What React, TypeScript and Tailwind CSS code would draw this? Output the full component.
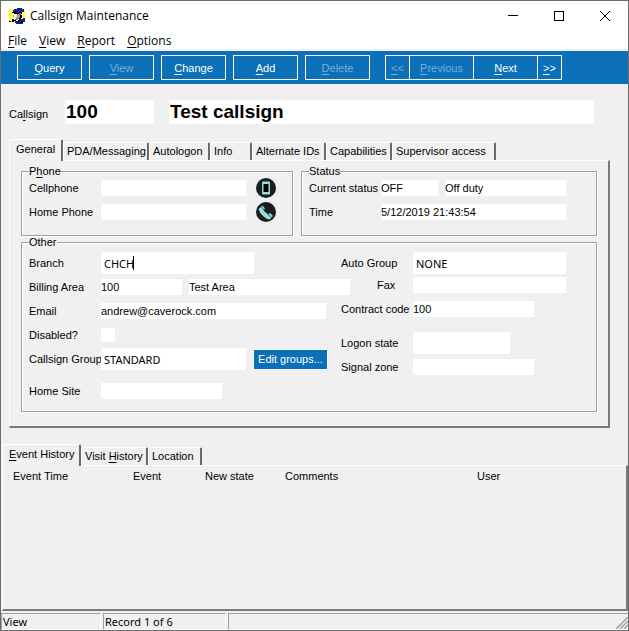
import { useState } from 'react';
import type { InputHTMLAttributes, ReactNode } from 'react';
import clsx from 'clsx';

// "&File" -> underlined F, same as the native menu captions
function Caption({ text }: { text: string }) {
  const i = text.indexOf('&');
  if (i < 0) return <>{text}</>;
  return (
    <>
      {text.slice(0, i)}
      <span className="underline underline-offset-2">{text[i + 1]}</span>
      {text.slice(i + 2)}
    </>
  );
}

function AppIcon() {
  return (
    <svg width="16" height="16" viewBox="0 0 16 16" shapeRendering="crispEdges" aria-hidden="true">
      <path fill="#ffff33" d="M0 1h5v4h-1v7h-4zM13 1h3v9h-3zM0 11h5v3h-5z" />
      <path fill="#10208a" d="M5 1h3v-1h5v1h2v3h-2v1h-8v-1h-1v-2h1z" />
      <path fill="#000" d="M3 4h4v1h6v1h-8v-1h-2z" />
      <path fill="#f4f4f4" d="M5 6h4v2h-1v4h-2v-2h-1z" />
      <path fill="#9a9a9a" d="M8 6h3v5h-2v1h-2v-3h1zM4 7h1v2h-1z" />
      <path fill="#d03030" d="M10 5h2v2h-2zM6 11h2v1h-2z" />
      <path fill="#000" d="M11 7h2v3h-1v2h-2v-2h1zM3 11h2v1h2v1h-2v1h-2zM0 13h2v1h-2z" />
      <path fill="#10208a" d="M9 12h2v-1h3v-1h2v4h-2v2h-7v-1h-1v-2h3z" />
      <path fill="#000" d="M7 13h3v1h-3zM12 13h2v2h-2z" />
    </svg>
  );
}

function MobileIcon() {
  return (
    <svg width="20" height="20" viewBox="0 0 20 20" aria-hidden="true">
      <circle cx="10" cy="10" r="10" fill="#1c1c1c" />
      <rect x="6" y="3.500" width="8" height="13" rx="1" fill="#8fe0e0" />
      <rect x="7.500" y="6" width="5" height="8" fill="#000" />
    </svg>
  );
}

function HandsetIcon() {
  return (
    <svg width="20" height="20" viewBox="0 0 20 20" aria-hidden="true">
      <circle cx="10" cy="10" r="10" fill="#1c1c1c" />
      <path
        d="M2.500 7L6.500 3.500L9 6.500L7.500 8.500L12 12.500L14 11L17 14L13.500 17.500Q11 17.500 7.500 14.500Q3.500 11 2.500 7Z"
        fill="#8fe0e0"
      />
      <path d="M5 4.500L8 8M12 12.500L15.500 15.500" stroke="#1c1c1c" strokeWidth="0.700" />
    </svg>
  );
}

interface FieldProps extends InputHTMLAttributes<HTMLInputElement> {
  className: string;
}

function Field({ className, ...rest }: FieldProps) {
  return <input type="text" className={clsx('shrink-0 bg-white outline-none', className)} {...rest} />;
}

interface RowProps {
  id: string;
  label: string;
  className?: string;
  labelClass?: string;
  children: ReactNode;
}

function Row({ id, label, className, labelClass, children }: RowProps) {
  return (
    <div className={clsx('flex items-center', className)}>
      <label htmlFor={id} className={clsx('w-[72px] shrink-0 whitespace-nowrap', labelClass)}>
        {label}
      </label>
      {children}
    </div>
  );
}

function Group({ title, className, children }: { title: string; className: string; children: ReactNode }) {
  return (
    <fieldset
      className={clsx(
        'border border-[#a0a0a0] px-[7px] shadow-[1px_1px_0_#fff,inset_1px_1px_0_#fff]',
        className
      )}
    >
      <legend className="h-3 bg-[#f0f0f0] leading-3">
        <Caption text={title} />
      </legend>
      {children}
    </fieldset>
  );
}

interface TabItem {
  name: string;
  width: string;
}

function TabStrip({ items }: { items: TabItem[] }) {
  const [active, setActive] = useState(items[0].name);
  return (
    <div role="tablist" className="flex items-end">
      {items.map((tab) => (
        <button
          key={tab.name}
          type="button"
          role="tab"
          aria-selected={tab.name === active}
          onClick={() => setActive(tab.name)}
          className={clsx(
            'rounded-t-xs border-t border-r-2 border-l border-t-white border-r-[#696969] border-l-white bg-[#f0f0f0] text-left whitespace-nowrap',
            tab.name === active ? 'z-10 -mb-px h-[22px] pb-1 pl-1.5' : 'h-[18px] pb-0.5 pl-[3px]',
            tab.width
          )}
        >
          <Caption text={tab.name} />
        </button>
      ))}
    </div>
  );
}

const panelBorder =
  'border-t border-l border-r-2 border-b-2 border-t-white border-l-white border-r-[#7a7a7a] border-b-[#7a7a7a]';

const menus = ['&File', '&View', '&Report', '&Options'];

const actions = [
  { name: '&Query', disabled: false },
  { name: '&View', disabled: true },
  { name: '&Change', disabled: false },
  { name: '&Add', disabled: false },
  { name: '&Delete', disabled: true },
];

const navigation = [
  { name: '&<<', disabled: true, width: 'w-[25px]' },
  { name: '&Previous', disabled: true, width: '-ml-px w-[65px]' },
  { name: '&Next', disabled: false, width: '-ml-px w-[65px]' },
  { name: '&>>', disabled: false, width: '-ml-px w-[25px]' },
];

const detailTabs = [
  { name: 'General', width: 'w-[54px]' },
  { name: 'PDA/Messaging', width: 'w-[86px]' },
  { name: 'Autologon', width: 'w-[61px]' },
  { name: 'Info', width: 'w-[42px]' },
  { name: 'Alternate IDs', width: 'w-[74px]' },
  { name: 'Capabilities', width: 'w-[66px]' },
  { name: 'Supervisor access', width: 'w-[104px]' },
];

const historyTabs = [
  { name: '&Event History', width: 'w-[79px]' },
  { name: 'Visit &History', width: 'w-[67px]' },
  { name: 'Location', width: 'w-[54px]' },
];

export default function App() {
  return (
    <div className="flex min-h-screen flex-col border border-[#6b6b6b] bg-[#f0f0f0] font-['Liberation_Sans',Arial,sans-serif] text-[11px] leading-[14px] text-black">
      <header className="bg-white font-['Open_Sans','Segoe_UI',sans-serif] text-[12px] leading-4">
        <div className="flex h-[30px] items-center pl-2">
          <AppIcon />
          <h1 className="ml-[5px] flex-1">Callsign Maintenance</h1>
          <button type="button" aria-label="Minimize" className="flex h-full w-[46px] items-center justify-center">
            <svg width="10" height="10" shapeRendering="crispEdges"><path d="M0 4.500H10" stroke="#000" /></svg>
          </button>
          <button type="button" aria-label="Maximize" className="flex h-full w-[46px] items-center justify-center">
            <svg width="10" height="10" shapeRendering="crispEdges"><path d="M.5 .5H9.500V9.500H.5Z" stroke="#000" fill="none" /></svg>
          </button>
          <button type="button" aria-label="Close" className="flex h-full w-[46px] items-center justify-center">
            <svg width="10" height="10"><path d="M0 0L10 10M10 0L0 10" stroke="#000" /></svg>
          </button>
        </div>
        <nav className="flex h-[18px] gap-3 pt-0.5 pl-[7px]">
          {menus.map((menu) => (
            <button key={menu} type="button"><Caption text={menu} /></button>
          ))}
        </nav>
      </header>

      <div className="mt-0.5 flex h-[33px] items-center gap-[7px] bg-[#0b70b8] px-4 text-white">
        {actions.map((action) => (
          <button
            key={action.name}
            type="button"
            disabled={action.disabled}
            className="h-[25px] w-[65px] border border-white disabled:text-[#79afd9]"
          >
            <Caption text={action.name} />
          </button>
        ))}
        <div className="ml-2 flex">
          {navigation.map((action) => (
            <button
              key={action.name}
              type="button"
              disabled={action.disabled}
              className={clsx('h-[25px] border border-white disabled:text-[#79afd9]', action.width)}
            >
              <Caption text={action.name} />
            </button>
          ))}
        </div>
      </div>

      <div className="mt-4 flex items-center pr-[34px] pl-2">
        <label htmlFor="callsign" className="mt-1 w-14"><Caption text="Ca&llsign" /></label>
        <Field id="callsign" defaultValue="100" className="h-6 w-[89px] pl-px text-[19px] font-bold" />
        <Field
          aria-label="Callsign name"
          defaultValue="Test callsign"
          className="ml-[15px] h-6 w-0 min-w-0 flex-1 pl-px text-[19px] font-bold"
        />
      </div>

      <section className="mt-[15px] mr-[18px] ml-2">
        <TabStrip items={detailTabs} />
        <div className={clsx('px-[11px] pt-1 pb-[14px]', panelBorder)}>
          <div className="flex gap-2">
            <Group title="P&hone" className="h-[71px] w-[272px]">
              <Row id="cellphone" label="Cellphone" className="mt-px h-5">
                <Field id="cellphone" className="h-4 w-[145px]" />
                <button type="button" aria-label="Call cellphone" className="ml-[10px]"><MobileIcon /></button>
              </Row>
              <Row id="homePhone" label="Home Phone" className="mt-1 h-5">
                <Field id="homePhone" className="h-4 w-[145px]" />
                <button type="button" aria-label="Call home phone" className="ml-[10px]"><HandsetIcon /></button>
              </Row>
            </Group>
            <Group title="Status" className="h-[71px] flex-1">
              <Row id="status" label="Current status" className="mt-px h-5">
                <Field id="status" defaultValue="OFF" className="h-4 w-[57px]" />
                <Field aria-label="Status description" defaultValue="Off duty" className="ml-[7px] h-4 w-[121px]" />
              </Row>
              <Row id="time" label="Time" className="mt-1 h-5">
                <Field id="time" defaultValue="5/12/2019 21:43:54" className="h-4 w-[185px]" />
              </Row>
            </Group>
          </div>

          <Group title="Other" className="h-44">
            <div className="flex pt-1">
              <div className="w-[312px] shrink-0">
                <Row id="branch" label="Branch">
                  <div className="flex h-[22px] w-[153px] items-center bg-white pl-[3px]">
                    <Field id="branch" defaultValue="CHCH" className="h-4 w-[29px] font-['Noto_Sans',Tahoma,sans-serif]" />
                    <span className="h-[14px] w-px bg-black" />
                  </div>
                </Row>
                <Row id="billing" label="Billing Area" className="mt-[5px]">
                  <Field id="billing" defaultValue="100" className="h-4 w-[81px]" />
                  <Field aria-label="Billing area name" defaultValue="Test Area" className="ml-[7px] h-4 w-[161px]" />
                </Row>
                <Row id="email" label="Email" className="mt-2">
                  <Field id="email" defaultValue="andrew@caverock.com" className="h-4 w-[225px]" />
                </Row>
                <Row id="disabled" label="Disabled?" className="mt-[9px]">
                  <input id="disabled" type="checkbox" className="size-[14px] appearance-none bg-white checked:bg-[#0b70b8]" />
                </Row>
                <Row id="group" label="Callsign Group" className="mt-[6px]">
                  <Field
                    id="group"
                    defaultValue="STANDARD"
                    className="h-[22px] w-[145px] pl-[3px] font-['Noto_Sans',Tahoma,sans-serif]"
                  />
                  <button
                    type="button"
                    className="ml-[7px] h-[21px] w-[75px] shrink-0 border border-white bg-[#0b70b8] whitespace-nowrap text-white"
                  >
                    Edit groups...
                  </button>
                </Row>
                <Row id="homeSite" label="Home Site" className="mt-[13px]">
                  <Field id="homeSite" className="h-4 w-[121px]" />
                </Row>
              </div>

              <div>
                <Row id="autoGroup" label="Auto Group">
                  <Field
                    id="autoGroup"
                    defaultValue="NONE"
                    className="h-[22px] w-[153px] pl-[3px] font-['Noto_Sans',Tahoma,sans-serif]"
                  />
                </Row>
                <Row id="fax" label="Fax" className="mt-[3px]" labelClass="pl-9">
                  <Field id="fax" className="h-4 w-[153px]" />
                </Row>
                <Row id="contract" label="Contract code" className="mt-2">
                  <Field id="contract" defaultValue="100" className="h-4 w-[121px]" />
                </Row>
                <Row id="logon" label="Logon state" className="mt-[15px]">
                  <Field id="logon" className="h-[22px] w-[97px] pl-[3px]" />
                </Row>
                <Row id="zone" label="Signal zone" className="mt-[5px]">
                  <Field id="zone" className="h-4 w-[121px]" />
                </Row>
              </div>
            </div>
          </Group>
        </div>
      </section>

      <section className="mt-4 flex flex-1 flex-col pl-px">
        <TabStrip items={historyTabs} />
        <div className={clsx('flex-1', panelBorder)}>
          <table className="mt-[3px] ml-[10px] table-fixed border-collapse text-left">
            <thead>
              <tr>
                <th className="w-[120px] p-0 font-normal">Event Time</th>
                <th className="w-[72px] p-0 font-normal">Event</th>
                <th className="w-20 p-0 font-normal">New state</th>
                <th className="w-48 p-0 font-normal">Comments</th>
                <th className="w-[120px] p-0 font-normal">User</th>
              </tr>
            </thead>
          </table>
        </div>
      </section>

      <footer className="mt-0.5 flex h-[17px] gap-0.5 font-['Noto_Sans',Tahoma,sans-serif] leading-4">
        <div className="w-[100px] border border-t-[#a0a0a0] border-r-white border-b-white border-l-[#a0a0a0] pl-px">View</div>
        <div className="w-[123px] border border-t-[#a0a0a0] border-r-white border-b-white border-l-[#a0a0a0] pl-px">Record 1 of 6</div>
        <div className="flex flex-1 items-end justify-end border border-r-0 border-t-[#a0a0a0] border-b-white border-l-[#a0a0a0]">
          <svg width="12" height="12" aria-hidden="true">
            <path d="M0 12L12 0M4 12L12 4M8 12L12 8" stroke="#a0a0a0" strokeWidth="1.500" />
          </svg>
        </div>
      </footer>
    </div>
  );
}
